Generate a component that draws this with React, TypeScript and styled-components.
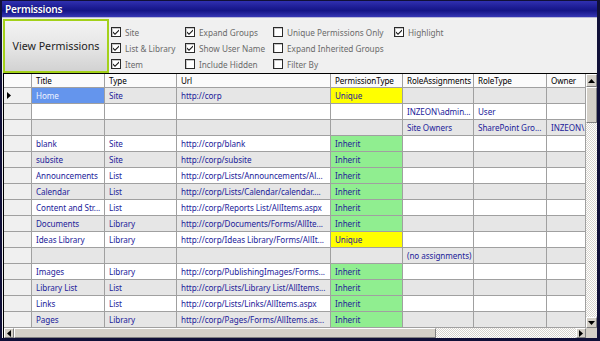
import React from "react";
import styled, { createGlobalStyle } from "styled-components";

const Global = createGlobalStyle`
  html, body { margin: 0; padding: 0; background: #fff; }
  body { font-family: "Noto Sans", "DejaVu Sans", sans-serif; }
  * { box-sizing: border-box; }
`;

const Frame = styled.div`
  width: 600px;
  height: 341px;
  background: #f0f0f0;
  border-style: solid;
  border-color: #101038;
  border-width: 1px 3px 3px 2px;
  display: flex;
  flex-direction: column;
  overflow: hidden;
`;

const TitleBar = styled.div`
  height: 17px;
  flex: none;
  display: flex;
  align-items: center;
  padding-left: 3px;
  background: linear-gradient(#3030b0 0%, #1a1a90 45%, #141486 60%, #3636b4 100%);
  border-bottom: 1px solid #b8b8d8;
  color: #fff;
  font-size: 10.2px;
  font-weight: 600;
  letter-spacing: -0.25px;
  text-shadow: 0 0 1px #000060;
`;

const Toolbar = styled.div`
  height: 55px;
  flex: none;
  display: flex;
  padding: 1px 0 0 1px;
`;

const ViewButton = styled.button`
  width: 106px;
  height: 54px;
  border: 2px solid #a3d11a;
  background: linear-gradient(#f3f3f3 0%, #e6e6e6 50%, #d2d2d2 100%);
  font-family: "Noto Sans", sans-serif;
  font-size: 10.7px;
  color: #222;
  padding: 0;
  margin: 0;
`;

const Options = styled.div`
  display: grid;
  grid-template-columns: 74px 88px 121px auto;
  grid-auto-rows: 16px;
  padding: 5px 0 0 2px;
`;

const Opt = styled.label`
  display: flex;
  align-items: center;
  gap: 4px;
  font-size: 8.2px;
  color: #6a6a6a;
  white-space: nowrap;
`;

const Box = styled.span`
  width: 10px;
  height: 10px;
  flex: none;
  background: #fff;
  border: 1px solid #2a2a2a;
  box-shadow: inset 1px 1px 0 #c8c8c8;
  display: flex;
  align-items: center;
  justify-content: center;
`;

const Check = ({ on }: { on: boolean }) => (
  <Box>
    {on && (
      <svg width="8" height="8" viewBox="0 0 8 8">
        <path d="M1 3.5 L3 5.5 L7 1.5 L7 3 L3 7 L1 5 Z" fill="#111" />
      </svg>
    )}
  </Box>
);

const Grid = styled.div`
  flex: none;
  margin-left: 1px;
  height: 265px;
  border-top: 1px solid #000;
  border-left: 1px solid #000;
  display: grid;
  grid-template-columns: 582px 11px;
  grid-template-rows: 254px 10px;
  background: #fff;
`;

const Table = styled.div`
  display: flex;
  flex-direction: column;
  overflow: hidden;
`;

const Row = styled.div<{ $h: number }>`
  display: grid;
  grid-template-columns: 28px 73px 72px 154px 72px 71px 73px 39px;
  height: ${(p) => p.$h}px;
  flex: none;
`;

const HeadCell = styled.div`
  border-right: 1px solid #a0a0a0;
  border-bottom: 1px solid #a0a0a0;
  background: #fbfbfb;
  font-size: 8.1px;
  letter-spacing: -0.1px;
  color: #000;
  padding-left: 4px;
  display: flex;
  align-items: center;
  white-space: nowrap;
  overflow: hidden;
`;

const RowHead = styled.div`
  border-right: 1px solid #a0a0a0;
  border-bottom: 1px solid #a0a0a0;
  background: #f0f0f0;
  display: flex;
  align-items: center;
  padding-left: 3px;
`;

const Cell = styled.div<{ $bg: string; $sel?: boolean }>`
  border-right: 1px solid #a0a0a0;
  border-bottom: 1px solid #a0a0a0;
  background: ${(p) => p.$bg};
  color: ${(p) => (p.$sel ? "#eef2ff" : "#22229a")};
  font-size: 8.1px;
  letter-spacing: -0.05px;
  padding-left: 4px;
  display: flex;
  align-items: center;
  white-space: nowrap;
  overflow: hidden;
`;

const VScroll = styled.div`
  display: flex;
  flex-direction: column;
  background: repeating-conic-gradient(#ffffff 0 25%, #d8d5cf 0 50%) 0 0 / 2px 2px;
`;

const HScroll = styled.div`
  display: flex;
  background: repeating-conic-gradient(#ffffff 0 25%, #d8d5cf 0 50%) 0 0 / 2px 2px;
`;

const Corner = styled.div`
  background: #d4d0c8;
`;

const ArrowBtn = styled.div<{ $w: number; $h: number }>`
  width: ${(p) => p.$w}px;
  height: ${(p) => p.$h}px;
  flex: none;
  background: #d4d0c8;
  border-top: 1px solid #fff;
  border-left: 1px solid #fff;
  border-right: 1px solid #808080;
  border-bottom: 1px solid #808080;
  display: flex;
  align-items: center;
  justify-content: center;
`;

const Thumb = styled.div<{ $w?: number; $h?: number }>`
  ${(p) => (p.$w ? `width: ${p.$w}px;` : "")}
  ${(p) => (p.$h ? `height: ${p.$h}px;` : "")}
  flex: none;
  background: #d4d0c8;
  border-top: 1px solid #fff;
  border-left: 1px solid #fff;
  border-right: 1px solid #808080;
  border-bottom: 1px solid #808080;
`;

const Spacer = styled.div`
  flex: 1;
`;

const Tri = ({ dir }: { dir: "up" | "down" | "left" | "right" }) => {
  const pts = {
    up: "0,4 3.5,0 7,4",
    down: "0,0 7,0 3.5,4",
    left: "4,0 4,7 0,3.5",
    right: "0,0 0,7 4,3.5",
  }[dir];
  const w = dir === "up" || dir === "down" ? 7 : 4;
  const h = dir === "up" || dir === "down" ? 4 : 7;
  return (
    <svg width={w} height={h} viewBox={`0 0 ${w} ${h}`}>
      <polygon points={pts} fill="#000" />
    </svg>
  );
};

type R = {
  t?: string;
  ty?: string;
  u?: string;
  p?: "Unique" | "Inherit" | "";
  ra?: string;
  rt?: string;
  o?: string;
};

const rows: R[] = [
  { t: "Home", ty: "Site", u: "http://corp", p: "Unique" },
  { ra: "INZEON\\admin...", rt: "User" },
  { ra: "Site Owners", rt: "SharePoint Gro...", o: "INZEON\\" },
  { t: "blank", ty: "Site", u: "http://corp/blank", p: "Inherit" },
  { t: "subsite", ty: "Site", u: "http://corp/subsite", p: "Inherit" },
  { t: "Announcements", ty: "List", u: "http://corp/Lists/Announcements/Al...", p: "Inherit" },
  { t: "Calendar", ty: "List", u: "http://corp/Lists/Calendar/calendar....", p: "Inherit" },
  { t: "Content and Str...", ty: "List", u: "http://corp/Reports List/AllItems.aspx", p: "Inherit" },
  { t: "Documents", ty: "Library", u: "http://corp/Documents/Forms/AllIte...", p: "Inherit" },
  { t: "Ideas Library", ty: "Library", u: "http://corp/Ideas Library/Forms/AllIt...", p: "Unique" },
  { ra: "(no assignments)" },
  { t: "Images", ty: "Library", u: "http://corp/PublishingImages/Forms...", p: "Inherit" },
  { t: "Library List", ty: "List", u: "http://corp/Lists/Library List/AllItems...", p: "Inherit" },
  { t: "Links", ty: "List", u: "http://corp/Lists/Links/AllItems.aspx", p: "Inherit" },
  { t: "Pages", ty: "Library", u: "http://corp/Pages/Forms/AllItems.as...", p: "Inherit" },
];

const headers = ["Title", "Type", "Url", "PermissionType", "RoleAssignments", "RoleType", "Owner"];

export default function App() {
  return (
    <>
      <Global />
      <Frame>
        <TitleBar>Permissions</TitleBar>
        <Toolbar>
          <ViewButton>View Permissions</ViewButton>
          <Options>
            <Opt><Check on />Site</Opt>
            <Opt><Check on />Expand Groups</Opt>
            <Opt><Check on={false} />Unique Permissions Only</Opt>
            <Opt><Check on />Highlight</Opt>
            <Opt><Check on />List &amp; Library</Opt>
            <Opt><Check on />Show User Name</Opt>
            <Opt><Check on={false} />Expand Inherited Groups</Opt>
            <span />
            <Opt><Check on />Item</Opt>
            <Opt><Check on={false} />Include Hidden</Opt>
            <Opt><Check on={false} />Filter By</Opt>
          </Options>
        </Toolbar>
        <Grid>
          <Table>
            <Row $h={14}>
              <HeadCell />
              {headers.map((h) => (
                <HeadCell key={h}>{h}</HeadCell>
              ))}
            </Row>
            {rows.map((r, i) => {
              const bg = i % 2 === 0 ? "#e6e6e6" : "#ffffff";
              const pbg = r.p === "Unique" ? "#ffff00" : r.p === "Inherit" ? "#90ee90" : bg;
              return (
                <Row $h={16} key={i}>
                  <RowHead>{i === 0 && <Tri dir="right" />}</RowHead>
                  <Cell $bg={i === 0 ? "#6495ed" : bg} $sel={i === 0}>{r.t}</Cell>
                  <Cell $bg={bg}>{r.ty}</Cell>
                  <Cell $bg={bg}>{r.u}</Cell>
                  <Cell $bg={pbg}>{r.p}</Cell>
                  <Cell $bg={bg}>{r.ra}</Cell>
                  <Cell $bg={bg}>{r.rt}</Cell>
                  <Cell $bg={bg}>{r.o}</Cell>
                </Row>
              );
            })}
          </Table>
          <VScroll>
            <ArrowBtn $w={11} $h={13}><Tri dir="up" /></ArrowBtn>
            <Thumb $h={36} />
            <Spacer />
            <ArrowBtn $w={11} $h={11}><Tri dir="down" /></ArrowBtn>
          </VScroll>
          <HScroll>
            <ArrowBtn $w={10} $h={10}><Tri dir="left" /></ArrowBtn>
            <Thumb $w={422} />
            <Spacer />
            <ArrowBtn $w={10} $h={10}><Tri dir="right" /></ArrowBtn>
          </HScroll>
          <Corner />
        </Grid>
      </Frame>
    </>
  );
}
